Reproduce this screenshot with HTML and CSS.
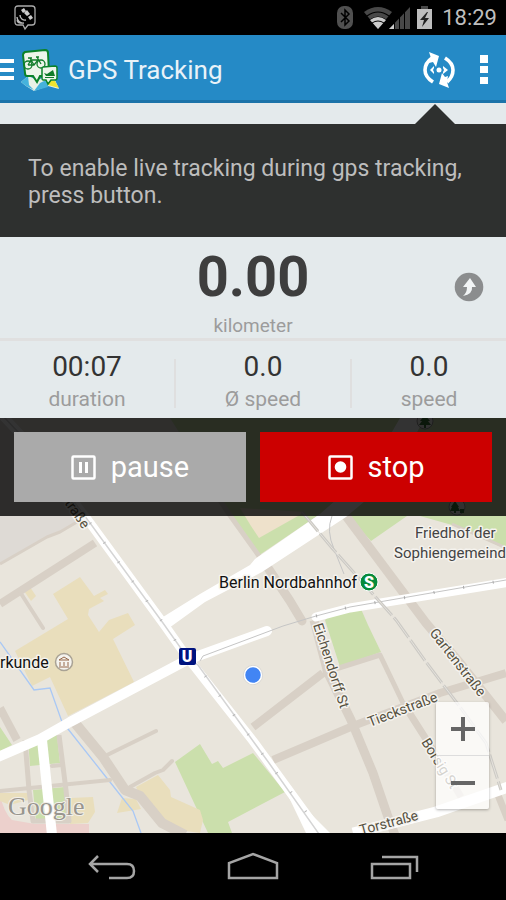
FILE: index.html
```html
<!DOCTYPE html>
<html lang="en">
<head>
    <meta charset="UTF-8">
    <meta name="viewport" content="width=device-width, initial-scale=1.0">
    <title>GPS Tracking</title>
    <link rel="stylesheet" href="styles.css">
</head>
<body>
    <div class="status-bar">
        <svg class="gps-icon" width="22" height="26" viewBox="0 0 22 26">
            <path d="M4 1h14q3 0 3 3v13q0 3-3 3h-4l-3 4-2-4H4q-3 0-3-3V4q0-3 3-3z" fill="none" stroke="#aaa" stroke-width="1.3"/>
            <path d="M7 5l3-2 2 3-3 2zM10 8l3-3 3 4-3 2zM14 12l3-2 2 3-3 2z" fill="#ccc"/>
            <path d="M3 12a6 6 0 0 0 7 6M3 15a4 4 0 0 0 4 3M6 10a5 5 0 0 0 6 5" fill="none" stroke="#bbb" stroke-width="1.4"/>
        </svg>
        <div class="status-right">
            <svg width="96" height="25" viewBox="338 4 96 25">
                <rect x="338" y="5" width="16" height="23" rx="7" fill="#505050"/>
                <path d="M342 12l8 8-4 4V9l4 4-8 8" fill="none" stroke="#000" stroke-width="1.5"/>
                <path d="M379 28L365 11q14-10 28 0z" fill="#484848"/>
                <path d="M368 15q11-8 22 0M371 19q8-6 16 0" fill="none" stroke="#000" stroke-width="1.2"/>
                <path d="M379 28l-8-9q8-6 16 0z" fill="#ccc"/>
                <path d="M373 22q6-4 12 0" fill="none" stroke="#000" stroke-width="1"/>
                <path d="M390 28l21-22v22z" fill="#484848"/>
                <path d="M390 28l5-5v5z" fill="#ccc"/>
                <path d="M395.500 5v23M400.500 5v23M405.500 5v23" stroke="#000" stroke-width="1"/>
                <path d="M422 5h7v3h4v20h-15V8h4z" fill="#bebebe"/>
                <path d="M422 5h7v3h-7z" fill="#484848"/>
                <path d="M428 11l-7 8h4l-2 7 7-9h-4l3-6z" fill="#222"/>
            </svg>
            <span class="clock">18:29</span>
        </div>
    </div>

    <header class="app-bar">
        <button class="icon-button" aria-label="Menu">
            <svg width="14" height="22" viewBox="0 0 14 22"><path d="M0 0h14v4H0zM0 9h14v4H0zM0 17h14v4H0z" fill="#fff"/></svg>
        </button>
        <svg class="logo" width="42" height="44" viewBox="20 48 42 44">
            <path d="M21 82l7-6 10 4 8-4 9 4 4 9-11-3-14 5-8-5z" fill="#e9f1e6"/>
            <path d="M21 82l7-6 1 9 5 5-8-4zM40 83l8-4v8l-14 4z" fill="#45b2dc"/>
            <path d="M49 80l6 1 4 7-11-3z" fill="#f0e431"/>
            <path d="M25 52l20-2q3 0 3 3l1 20q0 3-3 3h-6l-3 6-4-6h-6q-2 0-2-3l-2-18q0-2 2-3z" fill="#edf5ea" stroke="#0b8228" stroke-width="2"/>
            <g fill="none" stroke="#117c2a" stroke-width="1.300">
                <circle cx="28" cy="65" r="4"/>
                <circle cx="41" cy="64" r="4"/>
                <path d="M28 65l3-5h7l-4 5h-6M30 58l4 7M37 57l4 7M36 57h3M28 58h4"/>
            </g>
            <path d="M43 67l12-1q2 0 2 2v10q0 2-2 2h-4l-3 4-2-4h-3q-1 0-1-2v-9q0-2 1-2z" fill="#edf5ea" stroke="#0b8228" stroke-width="1.500"/>
            <path d="M44 73l3 1 6-4 1 3 1 3h-9zM45 77h9v1h-9z" fill="#117c2a"/>
        </svg>
        <h1>GPS Tracking</h1>
        <button class="icon-button sync" aria-label="Live tracking">
            <svg width="34" height="38" viewBox="422 50 34 38">
                <path d="M433 81q-8-5-8-12 0-7 7-12M445 57q8 5 8 12 0 7-6 12" fill="none" stroke="#fff" stroke-width="3.600"/>
                <path d="M429 51l10 4-3 11-3-5-4 1 2-5zM449 87l-10-4 3-11 3 4 3-1-1 6z" fill="#fff"/>
                <circle cx="439" cy="69" r="2.500" fill="#fff"/>
                <path d="M434 65v2l-1 2 1 2v2l-4-4zM443 65l5 4-5 4v-2l1-2-1-2z" fill="#fff"/>
            </svg>
        </button>
        <button class="icon-button" aria-label="More options">
            <svg width="8" height="30" viewBox="0 0 8 30"><path d="M0 0h8v8H0zM0 11h8v7H0zM0 22h8v7H0z" fill="#fff"/></svg>
        </button>
    </header>

    <main>
        <div class="notice">
            <p>To enable live tracking during gps tracking, press button.</p>
        </div>

        <section class="summary">
            <div class="distance">0.00</div>
            <div class="unit">kilometer</div>
            <button class="icon-button share" aria-label="Next value">
                <svg width="30" height="30" viewBox="0 0 30 30">
                    <circle cx="15" cy="15" r="14.300" fill="#8b8d8e"/>
                    <path d="M16 6l6 9h-4q1 7-9 9 4-3 4-9H9z" fill="#f1f4f5"/>
                </svg>
            </button>
        </section>

        <section class="stats">
            <div class="stat"><span class="value">00:07</span><span class="label">duration</span></div>
            <div class="stat"><span class="value">0.0</span><span class="label">Ø speed</span></div>
            <div class="stat"><span class="value">0.0</span><span class="label">speed</span></div>
        </section>

        <section class="map">
            <svg class="map-canvas" viewBox="0 418 506 415" preserveAspectRatio="xMidYMin slice">
                <rect x="0" y="418" width="506" height="415" fill="#e9e5dc"/>

                <!-- blocks and parks -->
                <path d="M0 418h10l67 104-17 10-13 5-47 27z" fill="#dedad5"/>
                <g fill="#cbdfac">
                    <path d="M170 418h336v131l-54-24-32-9h-13l-36 25-25-27h-26l-62 42-26-40z"/>
                    <path d="M325 620l6-5 30-6 7 16 13 27-41 15z"/>
                    <path d="M175 762l25-18 12 20 6-3 5 7 30-15 32 39-57 30 4 11h-24z"/>
                    <path d="M28 740l29-5 3 28-30 3zM33 790l32-3 3 33-32 2zM0 727l12 18-12 6z"/>
                </g>
                <path d="M240 508l65 4-46 26-8-12z" fill="#eee1cb"/>
                <path d="M0 795q4 18 12 25l23 4h54v9H0z" fill="#ecd0cc"/>
                <g fill="#e9debc">
                    <path d="M24 591l6-4 6 9-5 5z"/>
                    <path d="M53 594l27-17 14 19 11-6 3 4-8 4 4 3-15 8-1 6 11 17 10-12 19-7 7 12-22 14 21 43-66 34-18-39-18 9-17-35 53-32z"/>
                    <path d="M136 787l22-12 12 15 1 7 29 13 3 10-3 13-35-5-22-25zM117 813l5-15 14 1 5 10zM0 793h28v7l-18 5-10-4zM70 798l23-1 2 15-7 11-18 1z"/>
                </g>
                <path d="M0 642l34 48 16-2 12 34 6 7 38 48 27 34 8 22" fill="none" stroke="#a9c8f5" stroke-width="1.300"/>

                <!-- side streets -->
                <g fill="none" stroke="#d8d0c6" stroke-linejoin="round">
                    <path d="M77 522l-17 10-13 5-47 27" stroke-width="3"/>
                    <path d="M95 543L0 604" stroke-width="8"/>
                    <path d="M20 592l23 36M52 766l10-1M0 791l110-11M103 757l53-26M130 787l25-14 8-3 9-9" stroke-width="4" stroke-linecap="round"/>
                    <path d="M180 440l49 74 30 42" stroke-width="5"/>
                    <path d="M0 708l17 32" stroke-width="8"/>
                    <path d="M25 740l4 50 4 31h36l-3-31-7-55" stroke-width="5"/>
                    <path d="M75 723l28 34 22 33 15 6 22 27 23 12" stroke-width="10"/>
                    <path d="M268 568l22 33 12 20" stroke-width="9" stroke-linecap="round"/>
                    <path d="M343 512l83 111 34 40 46 58" stroke-width="9"/>
                    <path d="M314 620l14 53 23 47 22 53 15 44 7 18" stroke-width="9"/>
                    <path d="M273 760l80-34 87-33 66-20M253 727l70-54" stroke-width="8"/>
                    <path d="M323 673l57-18 23 48" stroke-width="5"/>
                    <path d="M403 703l30 47 28 47M496 790l12 30" stroke-width="7"/>
                    <path d="M452 524l54 24" stroke-width="3"/>
                </g>

                <!-- main roads -->
                <g fill="none" stroke="#fff" stroke-linejoin="round">
                    <path d="M3 416l30 32 57 75 73 100 24 34 66 84 16 22 48 66" stroke-width="9"/>
                    <path d="M284 787l22 46h24z" fill="#fff" stroke="none"/>
                    <path d="M163 617l37-23 50-29 5-6 65-45 50-44 30-52h25l-35 62-44 37-84 55-57 30-36 26z" fill="#fff" stroke="none"/>
                    <path d="M-2 757l42-18 30-17 117-62 80-29" stroke-width="10" stroke-linecap="round"/>
                    <path d="M42 740l10 95" stroke-width="10"/>
                    <path d="M316 617l34-9 160-26" stroke-width="9" stroke-linecap="round"/>
                    <path d="M353 833l83-21 75-26" stroke-width="11"/>
                </g>

                <!-- tram and rail lines -->
                <g fill="none" stroke="#c5c5c5">
                    <path d="M3 416l30 32 57 75 73 100 24 34 11 8 55 76 16 22 50 71" stroke="#d5d5d5" stroke-width="1.500"/>
                    <path d="M200 661l3-5 80-30 33-10 34-9 156-27"/>
                    <path d="M332 516q-6 15 2 33l10 25"/>
                    <path d="M90 523l73 100 24 34 10 8 56 76 16 22 40 53" stroke="#bbb" stroke-width="3" stroke-dasharray="1 23"/>
                    <path d="M316 616l34-9 156-27" stroke="#aaa" stroke-width="3" stroke-dasharray="1 29"/>
                    <path d="M302 512l30 36 64 72 30 42 34 45 26 36 15 47" stroke="#cccac5" stroke-width="3" stroke-dasharray="25 3"/>
                    <path d="M302 512l30 36 64 72 30 42 34 45 26 36 15 47" stroke="#e5e2dc"/>
                </g>

                <!-- places -->
                <g stroke="#999" fill="#f5f3ee">
                    <circle cx="425" cy="421" r="8"/>
                    <circle cx="457" cy="507" r="8"/>
                    <circle cx="64" cy="662" r="8.500" stroke="#a9a294" stroke-width="1.500"/>
                </g>
                <path d="M425 415l5 6h-2l3 4h-5v3h-2v-3h-5l3-4h-2zM455 501l4 6h-1l2 4h-4v2h-2v-2h-4l2-4h-1zM460 509h4v4h-4z" fill="#397a38"/>
                <path d="M59 660l5-3 5 3zM60 662v4M68 662v4M59 667h10M64 662v4" fill="none" stroke="#96684a" stroke-width="1"/>
                <rect x="179" y="648" width="17" height="17" rx="2" fill="#00137f"/>
                <circle cx="369" cy="582" r="9" fill="#078b3b" stroke="#fff"/>
                <g class="station">
                    <text x="187" y="662">U</text>
                    <text x="369" y="588">S</text>
                </g>
                <circle cx="253" cy="675" r="10" fill="#c9c9c9" opacity=".6"/>
                <circle cx="253" cy="675" r="8.500" fill="#4285f4" stroke="#fff" stroke-width="1.500"/>

                <g class="street">
                    <text transform="translate(60 497) rotate(55)">straße</text>
                    <text transform="translate(313 625) rotate(72)">Eichendorff St</text>
                    <text transform="translate(429 633) rotate(52)">Gartenstraße</text>
                    <text transform="translate(370 727) rotate(-21)">Tieckstraße</text>
                    <text transform="translate(421 742) rotate(58)">Borsig St</text>
                    <text transform="translate(361 835) rotate(-15)">Torstraße</text>
                </g>
                <g class="place">
                    <text class="area" x="415" y="538">Friedhof der</text>
                    <text class="area" x="394" y="558">Sophiengemeind</text>
                    <text x="219" y="588">Berlin Nordbahnhof</text>
                    <text x="0" y="668">rkunde</text>
                </g>
                <text class="google" x="8" y="815">Google</text>
            </svg>

            <div class="actions">
                <button class="pause">
                    <svg width="25" height="25" viewBox="0 0 25 25">
                        <rect x="1.500" y="1.500" width="22" height="22" rx="1" fill="none" stroke="#fff" stroke-width="2.500"/>
                        <path d="M8 7h3v11H8zM14 7h3v11h-3z" fill="#fff"/>
                    </svg>
                    pause
                </button>
                <button class="stop">
                    <svg width="25" height="25" viewBox="0 0 25 25">
                        <rect x="1.500" y="1.500" width="22" height="22" rx="1" fill="none" stroke="#fff" stroke-width="2.500"/>
                        <circle cx="12.500" cy="12" r="5.800" fill="#fff"/>
                    </svg>
                    stop
                </button>
            </div>

            <div class="zoom">
                <button aria-label="Zoom in">
                    <svg width="24" height="24" viewBox="0 0 24 24"><path d="M10 0h4v10h10v4H14v10h-4V14H0v-4h10z" fill="#666"/></svg>
                </button>
                <button aria-label="Zoom out">
                    <svg width="24" height="24" viewBox="0 0 24 24"><path d="M0 10h24v4H0z" fill="#666"/></svg>
                </button>
            </div>
        </section>
    </main>

    <nav class="nav-bar">
        <button aria-label="Back">
            <svg width="54" height="32" viewBox="85 852 54 32"><path d="M99 857l-8 8 8 8M91 865h37q7 0 7 7 0 7-7 7h-18" fill="none" stroke="#a5a5a5" stroke-width="2.500"/></svg>
        </button>
        <button aria-label="Home">
            <svg width="54" height="32" viewBox="226 852 54 32"><path d="M229 879v-15l24-9 24 9v15z" fill="none" stroke="#a5a5a5" stroke-width="2.500"/></svg>
        </button>
        <button aria-label="Recent apps">
            <svg width="54" height="32" viewBox="368 852 54 32"><path d="M372 865h38v14h-38zM382 858h35v15" fill="none" stroke="#a5a5a5" stroke-width="2.500"/></svg>
        </button>
    </nav>
</body>
</html>
```
FILE: styles.css
```css
* {
    box-sizing: border-box;
}

body {
    font-family: Roboto, sans-serif;
    background: #000;
    margin: 0;
    min-height: 100vh;
    display: flex;
    flex-direction: column;
}

button {
    font-family: inherit;
    border: none;
    padding: 0;
    background: none;
    cursor: pointer;
}

svg {
    display: block;
    flex: none;
}

.status-bar {
    height: 35px;
    padding: 0 9px 0 14px;
    display: flex;
    align-items: center;
    justify-content: space-between;
}

.status-right {
    display: flex;
    align-items: center;
    gap: 9px;
}

.clock {
    color: #bebebe;
    font-size: 22px;
    line-height: 34px;
}

.app-bar {
    height: 68px;
    padding: 4px 18px 0 0;
    display: flex;
    align-items: center;
    background: #258ac6;
    border-bottom: 3px solid #1c73a9;
}

.logo {
    margin: 0 6px;
}

.app-bar h1 {
    flex: 1;
    margin: 0;
    color: #e9f2f8;
    font-size: 26px;
    font-weight: normal;
}

.sync {
    margin-right: 24px;
}

main {
    flex: 1;
    display: flex;
    flex-direction: column;
    background: #e4eaec;
}

.notice {
    position: relative;
    margin-top: 21px;
    padding: 31px 28px 28px;
    background: #2e302f;
    color: #bdbdbd;
    font-size: 23px;
    line-height: 27px;
}

.notice::before {
    content: '';
    position: absolute;
    right: 51px;
    bottom: 100%;
    border: 20px solid transparent;
    border-top: none;
    border-bottom-color: #2e302f;
}

.notice p {
    margin: 0;
}

.summary {
    position: relative;
    padding-top: 4px;
    text-align: center;
    border-bottom: 3px solid #e0e0e0;
}

.distance {
    color: #3e3e3e;
    font-size: 56px;
    font-weight: bold;
    line-height: 72px;
}

.unit {
    color: #9c9c9c;
    font-size: 19px;
    line-height: 25px;
}

.share {
    position: absolute;
    right: 22px;
    top: 35px;
}

.stats {
    display: grid;
    grid-template-columns: 8fr 8fr 7fr;
    padding: 10px 0 3px;
}

.stat {
    padding-right: 2px;
    text-align: center;
    line-height: 32px;
    background: linear-gradient(#dfdfdf, #dfdfdf) right center / 2px 49px no-repeat;
}

.stat:last-child {
    padding-right: 0;
    background: none;
}

.value,
.label {
    display: block;
}

.value {
    color: #333;
    font-size: 28px;
}

.label {
    color: #9c9c9c;
    font-size: 21px;
}

.map {
    position: relative;
    flex: 1;
    min-height: 415px;
    overflow: hidden;
}

.map-canvas {
    position: absolute;
    top: 0;
    left: 0;
    width: 100%;
    height: 100%;
}

.street,
.place {
    stroke: #f5f3ee;
    stroke-width: 3px;
    stroke-linejoin: round;
    paint-order: stroke;
}

.street {
    font-size: 14px;
    fill: #55503f;
}

.place {
    font-size: 16px;
    fill: #111;
}

.place .area {
    font-size: 15px;
    fill: #444;
}

.station {
    font-size: 16px;
    font-weight: 900;
    fill: #fff;
    text-anchor: middle;
}

.google {
    font-family: "Liberation Serif", serif;
    font-size: 26px;
    fill: #98958e;
    stroke: #f2efe9;
    stroke-width: 2px;
    paint-order: stroke;
}

.actions {
    position: relative;
    display: flex;
    gap: 14px;
    padding: 14px;
    background: rgba(0, 0, 0, 0.8);
}

.actions button {
    flex: 1;
    height: 70px;
    display: flex;
    align-items: center;
    justify-content: center;
    gap: 15px;
    color: #fff;
    font-size: 29px;
}

.pause {
    background: #aaa;
}

.stop {
    background: #c00;
}

.zoom {
    position: absolute;
    right: 17px;
    bottom: 24px;
    width: 53px;
    background: rgba(255, 255, 255, 0.75);
    border-radius: 2px;
    box-shadow: 0 1px 3px rgba(0, 0, 0, 0.3);
}

.zoom button {
    width: 100%;
    height: 53px;
    display: flex;
    align-items: center;
    justify-content: center;
}

.zoom button + button {
    height: 54px;
    border-top: 1px solid #ddd;
}

.nav-bar {
    height: 67px;
    display: flex;
    justify-content: center;
}

.nav-bar button {
    width: 28%;
    display: flex;
    align-items: center;
    justify-content: center;
}
```
